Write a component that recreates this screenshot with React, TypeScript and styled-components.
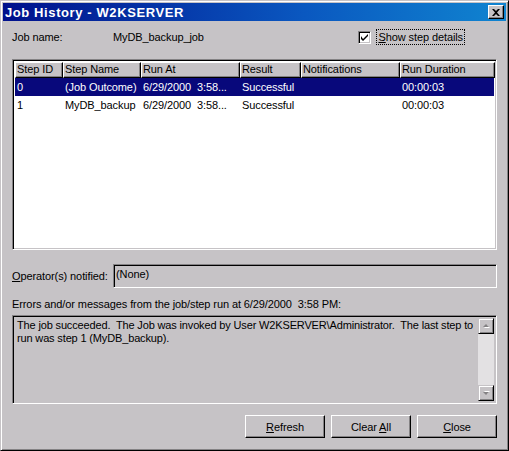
import { createGlobalStyle, styled } from "styled-components";

const face = "#C6C3C6";
const shadow = "#848284";
const dark = "#000000";

const Global = createGlobalStyle`
  html, body { margin: 0; padding: 0; background: #ffffff; }
  body {
    font-family: "Liberation Sans", Arial, sans-serif;
    font-size: 11px;
    letter-spacing: -0.1px;
    color: #000;
  }
  * { box-sizing: border-box; }
`;

const Window = styled.div`
  width: 509px;
  height: 451px;
  background: ${face};
  border: 1px solid;
  border-color: ${face} ${dark} ${dark} ${face};
  box-shadow: inset 1px 1px #fff, inset -1px -1px ${shadow};
  padding: 2px;
  display: flex;
  flex-direction: column;
`;

const TitleBar = styled.div`
  height: 18px;
  flex: none;
  display: flex;
  align-items: center;
  padding-left: 2px;
  background: linear-gradient(90deg, #00108c 0%, #0a58c0 60%, #1084d0 100%);
  color: #fff;
  font-weight: bold;
  font-size: 13px;
  letter-spacing: 0.6px;
`;

const TitleText = styled.span`
  flex: 1;
  white-space: pre;
`;

const CloseBox = styled.div`
  width: 16px;
  height: 14px;
  margin-right: 2px;
  background: ${face};
  border: 1px solid;
  border-color: #fff ${dark} ${dark} #fff;
  box-shadow: inset -1px -1px ${shadow};
  display: flex;
  align-items: center;
  justify-content: center;
`;

const Body = styled.div`
  flex: 1;
  display: flex;
  flex-direction: column;
  padding: 0 9px;
`;

const JobRow = styled.div`
  margin-top: 8px;
  height: 16px;
  display: flex;
  align-items: center;
`;

const Label = styled.span<{ $w?: number }>`
  width: ${(p) => (p.$w ? `${p.$w}px` : "auto")};
  flex: none;
  white-space: pre;
`;

const Value = styled.span`
  flex: 1;
`;

const CheckWrap = styled.label`
  display: flex;
  align-items: center;
  margin-right: 32px;
`;

const CheckBox = styled.span`
  width: 13px;
  height: 13px;
  background: #fff;
  border: 1px solid;
  border-color: ${shadow} #fff #fff ${shadow};
  box-shadow: inset 1px 1px ${dark}, inset -1px -1px ${face};
  display: flex;
  align-items: center;
  justify-content: center;
`;

const FocusText = styled.span`
  margin-left: 5px;
  padding: 0 1px;
  height: 16px;
  line-height: 14px;
  border: 1px dotted #000;
`;

const U = styled.span`
  text-decoration: underline;
`;

const Sunken = styled.div`
  border: 1px solid;
  border-color: ${shadow} #fff #fff ${shadow};
  box-shadow: inset 1px 1px ${dark}, inset -1px -1px ${face};
`;

const ListView = styled(Sunken)`
  margin-top: 14px;
  height: 191px;
  background: #fff;
  padding: 2px;
`;

const cols = "48px 78px 99px 61px 99px 95px";

const HeaderRow = styled.div`
  display: grid;
  grid-template-columns: ${cols};
  height: 16px;
`;

const HeaderCell = styled.div`
  background: ${face};
  border: 1px solid;
  border-color: #fff ${dark} ${dark} #fff;
  box-shadow: inset -1px -1px ${shadow};
  padding-left: 1px;
  line-height: 13px;
  white-space: nowrap;
  overflow: hidden;
`;

const Row = styled.div<{ $sel?: boolean }>`
  display: grid;
  grid-template-columns: ${cols};
  height: 18px;
  align-items: center;
  background: ${(p) => (p.$sel ? "#08087B" : "transparent")};
  color: ${(p) => (p.$sel ? "#fff" : "#000")};
`;

const Cell = styled.div`
  padding-left: 2px;
  white-space: pre;
  overflow: hidden;
`;

const OpRow = styled.div`
  margin-top: 14px;
  display: flex;
  align-items: center;
`;

const OpBox = styled(Sunken)`
  flex: 1;
  height: 24px;
  padding: 3px 2px;
  line-height: 13px;
  background: ${face};
`;

const ErrLabel = styled.div`
  margin-top: 10px;
  line-height: 13px;
  white-space: pre;
`;

const MsgBox = styled(Sunken)`
  margin-top: 4px;
  height: 89px;
  display: flex;
  padding: 2px;
  background: ${face};
`;

const MsgText = styled.div`
  flex: 1;
  padding: 1px 2px;
  line-height: 13px;
  letter-spacing: -0.15px;
  white-space: pre-wrap;
`;

const ScrollBar = styled.div`
  width: 16px;
  display: flex;
  flex-direction: column;
  background: #e3e1e3;
`;

const ScrollBtn = styled.div`
  width: 16px;
  height: 16px;
  background: ${face};
  border: 1px solid;
  border-color: ${face} ${dark} ${dark} ${face};
  box-shadow: inset 1px 1px #fff, inset -1px -1px ${shadow};
  display: flex;
  align-items: center;
  justify-content: center;
`;

const Track = styled.div`
  flex: 1;
`;

const ButtonRow = styled.div`
  margin-top: 11px;
  display: flex;
  justify-content: flex-end;
  gap: 6px;
`;

const Button = styled.div`
  width: 80px;
  height: 23px;
  background: ${face};
  border: 1px solid;
  border-color: #fff ${dark} ${dark} #fff;
  box-shadow: inset -1px -1px ${shadow};
  display: flex;
  align-items: center;
  justify-content: center;
`;

const Arrow = ({ up }: { up?: boolean }) => (
  <svg width="9" height="6" viewBox="0 0 9 6">
    <g transform={up ? undefined : "translate(0 6) scale(1 -1)"}>
      <path d="M4 1 L7 4 L1 4 Z" fill="#fff" transform="translate(1 1)" />
      <path d="M4 1 L7 4 L1 4 Z" fill={shadow} />
    </g>
  </svg>
);

const rows = [
  ["0", "(Job Outcome)", "6/29/2000  3:58...", "Successful", "", "00:00:03"],
  ["1", "MyDB_backup", "6/29/2000  3:58...", "Successful", "", "00:00:03"],
];

const headers = ["Step ID", "Step Name", "Run At", "Result", "Notifications", "Run Duration"];

export default function App() {
  return (
    <>
      <Global />
      <Window>
        <TitleBar>
          <TitleText>Job History - W2KSERVER</TitleText>
          <CloseBox>
            <svg width="8" height="7" viewBox="0 0 8 7">
              <path d="M0 0h2l2 2 2-2h2L5 3.5 8 7H6L4 5 2 7H0l3-3.5z" fill="#000" />
            </svg>
          </CloseBox>
        </TitleBar>
        <Body>
          <JobRow>
            <Label $w={101}>Job name:</Label>
            <Value>MyDB_backup_job</Value>
            <CheckWrap>
              <CheckBox>
                <svg width="7" height="7" viewBox="0 0 7 7">
                  <path d="M0 2v3l2 2 5-5V-0L2 5z" fill="#000" />
                </svg>
              </CheckBox>
              <FocusText>
                <U>S</U>how step details
              </FocusText>
            </CheckWrap>
          </JobRow>

          <ListView>
            <HeaderRow>
              {headers.map((h) => (
                <HeaderCell key={h}>{h}</HeaderCell>
              ))}
            </HeaderRow>
            {rows.map((r, i) => (
              <Row key={i} $sel={i === 0}>
                {r.map((c, j) => (
                  <Cell key={j}>{c}</Cell>
                ))}
              </Row>
            ))}
          </ListView>

          <OpRow>
            <Label $w={101}>
              <U>O</U>perator(s) notified:
            </Label>
            <OpBox>(None)</OpBox>
          </OpRow>

          <ErrLabel>Errors and/or messages from the job/step run at 6/29/2000  3:58 PM:</ErrLabel>
          <MsgBox>
            <MsgText>
              The job succeeded.  The Job was invoked by User W2KSERVER\Administrator.  The last step to run was step 1 (MyDB_backup).
            </MsgText>
            <ScrollBar>
              <ScrollBtn>
                <Arrow up />
              </ScrollBtn>
              <Track />
              <ScrollBtn>
                <Arrow />
              </ScrollBtn>
            </ScrollBar>
          </MsgBox>

          <ButtonRow>
            <Button>
              <span>
                <U>R</U>efresh
              </span>
            </Button>
            <Button>
              <span>
                Clear <U>A</U>ll
              </span>
            </Button>
            <Button>
              <span>
                <U>C</U>lose
              </span>
            </Button>
          </ButtonRow>
        </Body>
      </Window>
    </>
  );
}
